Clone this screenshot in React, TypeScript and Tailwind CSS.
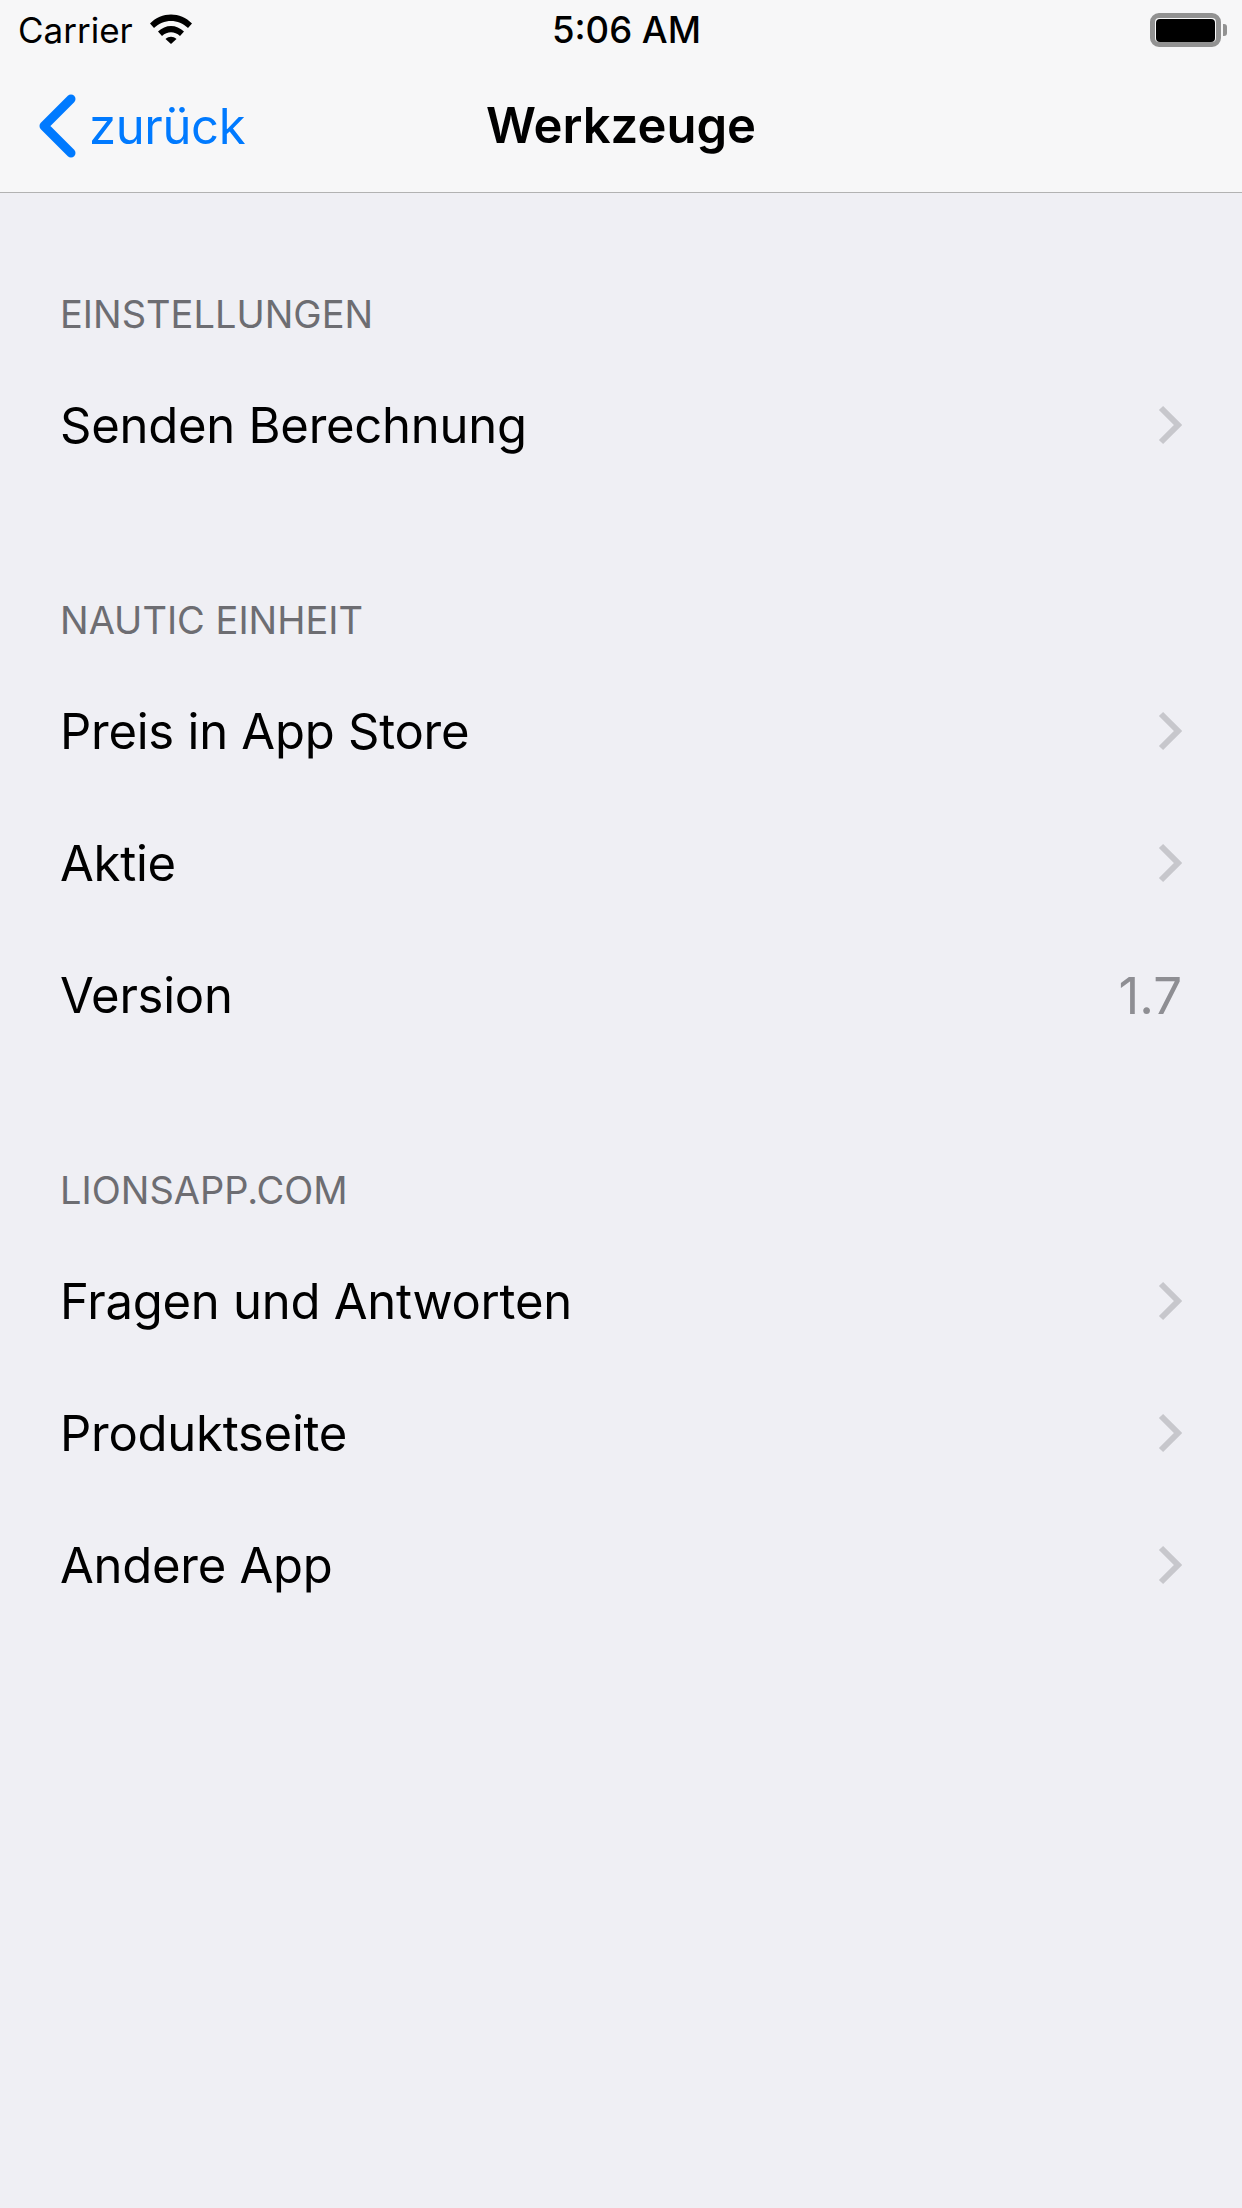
import React from 'react';

const ChevronRight = () => (
  <svg width="24" height="40" viewBox="0 0 24 40" fill="none" className="shrink-0">
    <path d="M3 3l17 17L3 37" stroke="#c7c7cc" strokeWidth="6" />
  </svg>
);

const Row = ({ label, value }: { label: string; value?: string }) => (
  <div className="flex h-[132px] items-center justify-between pl-[60px] pr-[60px]">
    <span className="text-[49px] leading-none tracking-[-0.25px] text-black">{label}</span>
    {value ? <span className="text-[51px] leading-none text-[#8e8e93]">{value}</span> : <ChevronRight />}
  </div>
);

const Section = ({ title, children }: { title: string; children: React.ReactNode }) => (
  <section>
    <div className="flex h-[174px] items-end pb-[22px] pl-[60px] text-[38px] leading-[46px] text-[#6d6d72]">{title}</div>
    {children}
  </section>
);

const StatusBar = () => (
  <div className="flex h-[60px] items-center justify-between pl-[18px] pr-[15px] text-[35px] text-black">
    {/* Carrier + wifi */}
    <div className="flex w-[404px] items-center gap-[17px]">
      <span>Carrier</span>
      <svg width="42" height="30" viewBox="0 0 42 30" className="-mt-[3px]">
        <path d="M0 9.5C11.5-2.5 30.5-2.5 42 9.5l-4 4.5C28.5 4.500 13.500 4.500 4 14z" fill="#000" />
        <path d="M8 17.5c7.500-7.500 18.500-7.500 26 0l-4 4.500c-5.500-5-12.500-5-18 0z" fill="#000" />
        <path d="M15.500 25c3.500-3 7.500-3 11 0L21 30z" fill="#000" />
      </svg>
    </div>
    <span className="text-[36.5px] font-medium">5:06 AM</span>
    {/* Battery */}
    <div className="flex w-[396px] items-center justify-end">
      <div className="flex h-[34px] w-[71px] items-center justify-center rounded-[9px] border-[5px] border-[#929292]">
        <div className="h-[23px] w-[59px] rounded-[4px] bg-black" />
      </div>
      <div className="ml-[2px] h-[12px] w-[4px] rounded-r-[3px] bg-[#929292]" />
    </div>
  </div>
);

const NavBar = () => (
  <div className="relative flex h-[133px] items-center border-b border-b-[#b2b2b2]">
    <div className="flex items-center pl-[38px] text-[#007aff]">
      <svg width="38" height="64" viewBox="0 0 38 64" fill="none">
        <path d="M33 5L6 32l27 27" stroke="#007aff" strokeWidth="9" strokeLinecap="round" strokeLinejoin="round" />
      </svg>
      <span className="ml-[13px] text-[49px] leading-none tracking-[-0.35px]">zurück</span>
    </div>
    <span className="absolute left-0 right-0 -translate-y-[1px] text-center text-[49px] font-semibold leading-none text-black">Werkzeuge</span>
  </div>
);

export default function App() {
  return (
    <div className="h-[2208px] w-[1242px] overflow-hidden bg-[#efeff4] font-['Inter','Liberation_Sans',sans-serif]">
      <header className="bg-[#f7f7f8]">
        <StatusBar />
        <NavBar />
      </header>
      <main className="-mt-[8px]">
        <Section title="EINSTELLUNGEN">
          <Row label="Senden Berechnung" />
        </Section>
        <Section title="NAUTIC EINHEIT">
          <Row label="Preis in App Store" />
          <Row label="Aktie" />
          <Row label="Version" value="1.7" />
        </Section>
        <Section title="LIONSAPP.COM">
          <Row label="Fragen und Antworten" />
          <Row label="Produktseite" />
          <Row label="Andere App" />
        </Section>
      </main>
    </div>
  );
}
